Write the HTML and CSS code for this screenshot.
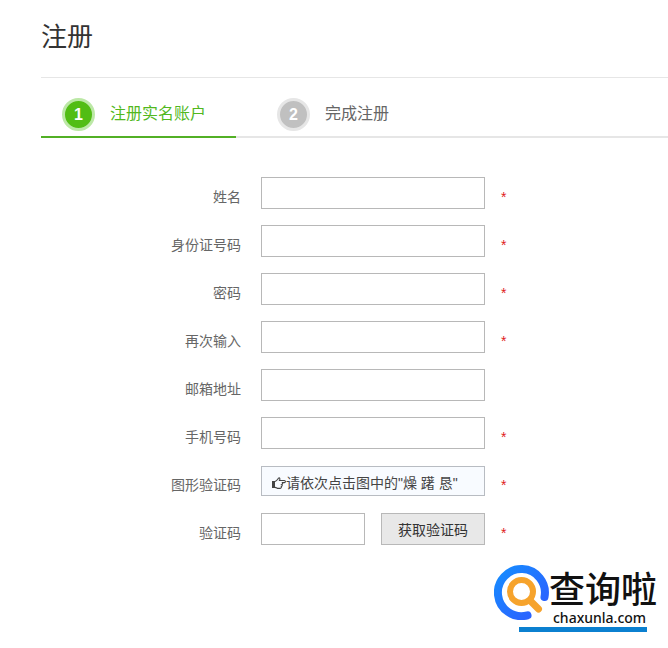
FILE: index.html
```html
<!DOCTYPE html>
<html lang="zh-CN">
<head>
<meta charset="utf-8">
<title>注册</title>
<link rel="stylesheet" href="styles.css">
</head>
<body>
<main class="page">
  <h1 class="title">注册</h1>
  <ol class="steps">
    <li class="step step-active"><span class="num">1</span>注册实名账户</li>
    <li class="step"><span class="num">2</span>完成注册</li>
  </ol>
  <form class="form">
    <div class="row"><label class="label" for="name">姓名</label><div class="field"><input class="input" id="name" type="text"></div><span class="star">*</span></div>
    <div class="row"><label class="label" for="idno">身份证号码</label><div class="field"><input class="input" id="idno" type="text"></div><span class="star">*</span></div>
    <div class="row"><label class="label" for="pwd">密码</label><div class="field"><input class="input" id="pwd" type="password"></div><span class="star">*</span></div>
    <div class="row"><label class="label" for="pwd2">再次输入</label><div class="field"><input class="input" id="pwd2" type="password"></div><span class="star">*</span></div>
    <div class="row"><label class="label" for="email">邮箱地址</label><div class="field"><input class="input" id="email" type="email"></div></div>
    <div class="row"><label class="label" for="phone">手机号码</label><div class="field"><input class="input" id="phone" type="tel"></div><span class="star">*</span></div>
    <div class="row"><label class="label" for="captcha">图形验证码</label><div class="field"><button class="captcha" id="captcha" type="button"><svg class="hand" viewBox="0 0 14 12" aria-hidden="true"><path d="M0 4h3v7H0z" fill="#444"/><path d="M3 4.500C4.800 4 5.500 2.500 6.500 1.200C7.500.3 8.500 1.500 7.500 3.500H12.300C13.800 3.500 13.800 5.600 12.300 5.600H9.800C11 5.700 10.900 7.500 9.800 7.600C10.500 8.100 10.300 9.200 9.300 9.400C9.700 10.400 9 11.400 8 11.400H6C5 11.400 4.500 10.400 3 10.400" fill="none" stroke="#444" stroke-width="1.100"/></svg>请依次点击图中的"燥 躇 恳"</button></div><span class="star">*</span></div>
    <div class="row"><label class="label" for="code">验证码</label><div class="field"><input class="input" id="code" type="text"><button class="send" type="button">获取验证码</button></div><span class="star">*</span></div>
  </form>
</main>
<div class="brand">
  <div class="brand-main">
    <svg class="logo" viewBox="0 0 55 55" aria-hidden="true">
      <defs><linearGradient id="blue" x1="0" y1="0" x2="1" y2="1"><stop offset="0" stop-color="#168cff"/><stop offset="1" stop-color="#2f5cff"/></linearGradient></defs>
      <path d="M33.500 50.300A23.500 23.500 0 1 1 50.500 32" fill="none" stroke="url(#blue)" stroke-width="8" stroke-linecap="round"/>
      <circle cx="27.500" cy="26.500" r="11.500" fill="none" stroke="#f6a32c" stroke-width="6"/>
      <path d="M36 35.500L44.500 44" stroke="#f6a32c" stroke-width="7" stroke-linecap="round"/>
    </svg>
    <div class="brand-text"><span class="brand-name">查询啦</span><span class="brand-url">chaxunla.com</span></div>
  </div>
  <div class="brand-bar"></div>
</div>
</body>
</html>
```
FILE: styles.css
```css
* { box-sizing: border-box; }
body {
  margin: 0;
  background: #fff;
  color: #666;
  font: 14px/20px "Liberation Sans", "Noto Sans CJK SC", sans-serif;
}
input, button { font: inherit; }
.page { padding: 17px 0 0 41px; }
.title {
  margin: 0;
  padding-bottom: 20px;
  border-bottom: 1px solid #e6e6e6;
  color: #333;
  font-size: 26px;
  font-weight: 400;
  line-height: 40px;
}
.steps {
  display: flex;
  margin: 14px 0 0;
  padding: 0;
  list-style: none;
  box-shadow: inset 0 -2px #e6e6e6;
}
.step {
  display: flex;
  align-items: center;
  height: 46px;
  padding: 0 30px 2px 21px;
  margin-right: 20px;
  gap: 15px;
  font-size: 16px;
  white-space: nowrap;
}
.step-active { color: #52b81e; box-shadow: inset 0 -2px #52b025; }
.num {
  width: 33px;
  height: 33px;
  border: 3px solid #e6e6e6;
  border-radius: 50%;
  background: #c0c0c0;
  color: #fff;
  font-weight: 700;
  line-height: 27px;
  text-align: center;
}
.step-active .num { border-color: #bce8a6; background: #52bd14; }
.form { display: grid; gap: 16px; padding-top: 39px; }
.row { display: flex; height: 32px; }
.label {
  width: 200px;
  margin-right: 20px;
  padding-top: 10px;
  text-align: right;
}
.field { display: flex; align-items: center; width: 224px; gap: 16px; }
.input {
  flex: 1;
  min-width: 0;
  height: 32px;
  padding: 0 10px;
  border: 1px solid #b8b8b8;
  background: #fff;
}
.star { padding: 10px 0 0 16px; color: #e02020; }
.captcha {
  display: flex;
  align-items: center;
  width: 100%;
  height: 30px;
  padding: 3px 10px 0;
  border: 1px solid #b8bcc2;
  background: #f8fbff;
  color: #444;
  white-space: nowrap;
}
.hand { width: 14px; height: 12px; flex: none; }
.send {
  width: 104px;
  height: 32px;
  padding: 2px 0 0;
  border: 1px solid #b8b8b8;
  background: #e8e8e8;
  color: #333;
}
.brand { position: absolute; right: 11px; bottom: 16px; width: 163px; }
.brand-main { display: flex; }
.logo { width: 55px; height: 55px; flex: none; }
.brand-text { display: flex; flex-direction: column; color: #111; }
.brand-name {
  font-family: "Noto Sans CJK SC", sans-serif;
  font-size: 36px;
  font-weight: 500;
  line-height: 44px;
  white-space: nowrap;
}
.brand-url {
  padding-left: 4px;
  font-family: "Noto Sans", sans-serif;
  font-size: 14px;
  font-weight: 500;
  line-height: 18px;
}
.brand-bar { height: 5px; margin: 0 10px 0 25px; background: #0b80d0; }
```
